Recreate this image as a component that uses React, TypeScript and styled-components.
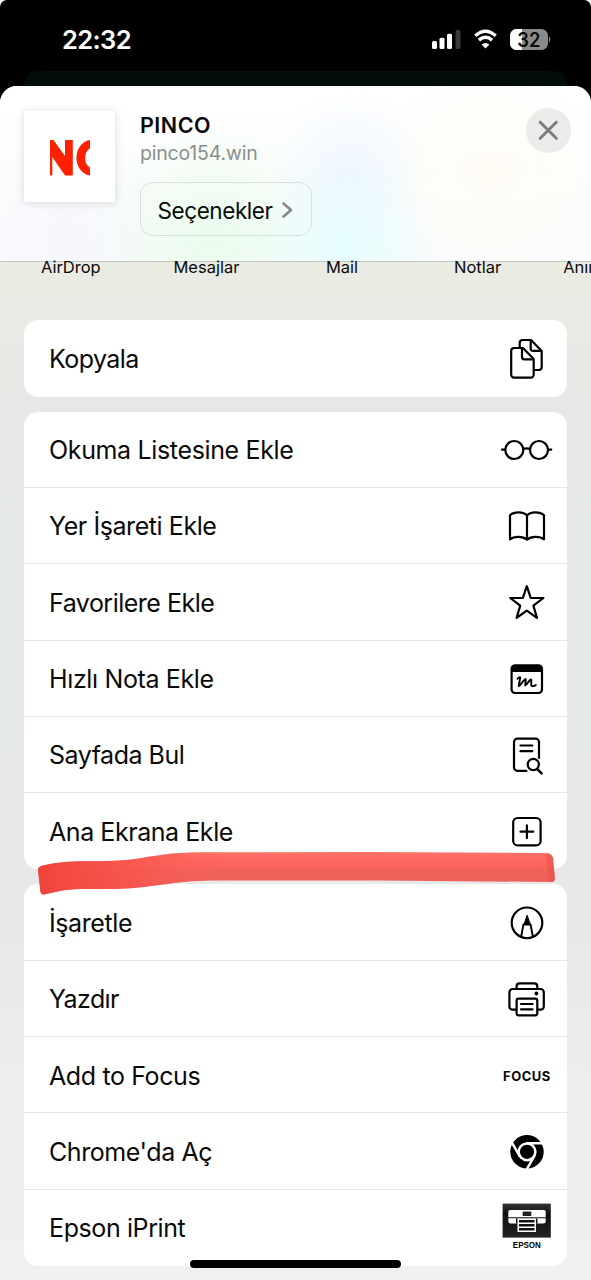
import React from 'react';
import styled, { createGlobalStyle } from 'styled-components';

const Global = createGlobalStyle`
  * { box-sizing: border-box; }
  html, body { margin: 0; padding: 0; background: #fff; }
  body { font-family: Inter, "Liberation Sans", sans-serif; color: #0a0a0a; }
`;

const Screen = styled.div`
  position: relative;
  width: 591px;
  height: 1280px;
  overflow: hidden;
  display: flex;
  flex-direction: column;
  background: #000;
  border-radius: 7px 7px 0 0;
`;

const StatusBar = styled.div`
  height: 71px;
  flex: none;
  display: flex;
  justify-content: space-between;
  padding: 0 40px 0 62px;
  color: #fff;
`;

const Clock = styled.div`
  font-size: 25.5px;
  font-weight: 600;
  line-height: 30px;
  padding-top: 25px;
  letter-spacing: -0.6px;
`;

const StatusIcons = styled.svg`
  display: block;
  margin-top: 24px;
`;

const PageBehind = styled.div`
  height: 15px;
  flex: none;
  margin: 0 24px;
  border-radius: 14px 14px 0 0;
  background: #020d07;
`;

const Sheet = styled.div`
  flex: 1;
  border-radius: 17px 17px 0 0;
  overflow: hidden;
  background: linear-gradient(180deg, #eaebe3 0px, #eaebe3 200px, #e6e8e5 310px, #e5e8e9 480px, #e5e8e9 640px, #eae8e7 850px, #ededec 1000px, #f0f0ef 1194px);
`;

const Header = styled.div`
  height: 176px;
  display: flex;
  padding: 24px 20px 0 24px;
  border-bottom: 1px solid #c3c6c5;
  background:
    radial-gradient(circle 95px at 345px 160px, rgba(226, 253, 255, 0.85), rgba(226, 253, 255, 0)),
    radial-gradient(circle 80px at 350px 85px, rgba(234, 244, 255, 0.75), rgba(234, 244, 255, 0)),
    radial-gradient(circle 120px at 215px 150px, rgba(232, 252, 234, 0.9), rgba(232, 252, 234, 0)),
    radial-gradient(circle 110px at 490px 85px, rgba(255, 252, 244, 0.9), rgba(255, 252, 244, 0)),
    radial-gradient(circle 110px at 70px 150px, rgba(245, 247, 253, 0.9), rgba(245, 247, 253, 0)),
    linear-gradient(180deg, #ffffff, #fafbfb);
`;

const Thumb = styled.div`
  width: 91px;
  height: 91px;
  margin-top: 1px;
  background: #fff;
  box-shadow: 0 1px 8px rgba(0, 0, 0, 0.14);
  flex: none;
  svg { display: block; }
`;

const Info = styled.div`
  flex: 1;
  margin-left: 25px;
  display: flex;
  flex-direction: column;
  align-items: flex-start;
`;

const Title = styled.div`
  font-size: 21.5px;
  font-weight: 600;
  line-height: 28px;
  padding-top: 1px;
  letter-spacing: 0.5px;
`;

const Subtitle = styled.div`
  font-size: 19.5px;
  line-height: 26px;
  margin-top: 1px;
  color: #8b8e8d;
  letter-spacing: -0.2px;
`;

const OptionsButton = styled.button`
  width: 172px;
  height: 54px;
  margin-top: 16px;
  padding: 2px 17px 0 16.5px;
  display: flex;
  align-items: center;
  justify-content: space-between;
  border: 1.5px solid rgba(0, 0, 0, 0.11);
  border-radius: 13px;
  background: transparent;
  color: #0a0a0a;
  font: 400 22.5px Inter, sans-serif;
  letter-spacing: -0.42px;
`;

const CloseButton = styled.button`
  width: 45px;
  height: 45px;
  margin-top: -2px;
  padding: 0;
  border: 0;
  border-radius: 50%;
  background: #ebebea;
  svg { display: block; }
`;

const ShareLabels = styled.div`
  display: flex;
  height: 58px;
  padding-left: 3px;
  font-size: 16.5px;
  line-height: 20px;
  margin-top: -5px;
`;

const ShareLabel = styled.div`
  flex: 0 0 135.6px;
  text-align: center;
`;

const Cards = styled.div`
  display: flex;
  flex-direction: column;
  gap: 15px;
  padding: 5.2px 24px 0;
  width: 591px;
`;

const Card = styled.div`
  border-radius: 14px;
  background: #fff;
  width: 543px;
`;

const Row = styled.div`
  height: 76.33px;
  display: flex;
  align-items: center;
  justify-content: space-between;
  padding: 1.6px 12px 0 25px;
  border-bottom: 1px solid #e5e7e7;
  &:last-child { border-bottom-color: transparent; }
  svg { display: block; flex: none; }
`;

const RowLabel = styled.div<{ $track: number }>`
  font-size: 25px;
  line-height: 32px;
  white-space: nowrap;
  letter-spacing: ${(p) => p.$track}px;
`;

const FocusMark = styled.div`
  width: 56px;
  text-align: center;
  font-size: 13px;
  font-weight: 700;
  letter-spacing: 0.5px;
`;

const Marker = styled.svg`
  position: absolute;
  left: 30px;
  top: 845px;
`;

const HomeIndicator = styled.div`
  position: absolute;
  left: 190px;
  top: 1260px;
  width: 211px;
  height: 8px;
  border-radius: 4px;
  background: #000;
`;

const Icon = ({ children }: { children: React.ReactNode }) => (
  <svg width="56" height="56" viewBox="0 0 56 56" fill="none" stroke="#000" strokeWidth="2.200" strokeLinecap="round" strokeLinejoin="round">
    {children}
  </svg>
);

const CopyIcon = () => (
  <Icon>
    <path d="M20.700 16V12a3 3 0 0 1 3-3H32L42.700 20V36a3 3 0 0 1-3 3H36" />
    <path d="M31.700 9.500V17.500a2.300 2.300 0 0 0 2.300 2.300H42" />
    <path d="M15.200 17H24L34.700 28V43.700a3 3 0 0 1-3 3H15.200a3 3 0 0 1-3-3V20a3 3 0 0 1 3-3Z" />
    <path d="M23 17.500V26a2.300 2.300 0 0 0 2.300 2.300H34" />
  </Icon>
);

const GlassesIcon = () => (
  <Icon>
    <circle cx="15.300" cy="28" r="9" />
    <circle cx="40" cy="28" r="9" />
    <path d="M24.300 26.900Q27.700 25.900 31 26.900M3 27.600H6M49.300 27.600H52.300" />
  </Icon>
);

const BookIcon = () => (
  <Icon>
    <path d="M28 41.500V17.500C24.500 13.300 15 13.300 11 17.300V41.300C15 38.200 24 38 28 41.700C32 38 41 38.200 45 41.300V17.300C41 13.300 31.500 13.300 28 17.500" />
  </Icon>
);

const StarIcon = () => (
  <Icon>
    <path d="M27.800 11.200L31.700 22.800L44.400 23L34.400 30.700L38 42.900L27.800 35.700L17.600 42.900L21.200 30.700L11.200 23L23.900 22.800Z" />
  </Icon>
);

const QuickNoteIcon = () => (
  <Icon>
    <rect x="12.600" y="14.300" width="30.400" height="27.700" rx="3.500" />
    <path d="M12.600 21V17.500a3.200 3.200 0 0 1 3.200-3.200H39.800a3.200 3.200 0 0 1 3.200 3.200V21Z" fill="#000" stroke="none" />
    <path strokeWidth="1.900" d="M18.500 27.800C20 26.500 21.300 25.300 21.200 27C20.900 30 19.300 34 19.800 35.200C21.300 34.500 24.500 28.700 26.800 28C27.500 28.500 25.700 33 26.200 34.300C27.800 34 30 29.300 32 28.500C33 28.800 31.700 33 32.300 34.300C33.300 35.600 35 35.300 36.800 33.900" />
  </Icon>
);

const FindIcon = () => (
  <Icon>
    <path d="M40 31V15a3.300 3.300 0 0 0-3.300-3.300H18.300A3.300 3.300 0 0 0 15 15V40.500a3.300 3.300 0 0 0 3.300 3.300H27.500" />
    <path d="M21.500 18.500H33.300M21.500 24.200H33.300" />
    <circle cx="34.300" cy="37.500" r="5.600" />
    <path d="M38.600 42.300L42.600 46.300" strokeWidth="2.500" />
  </Icon>
);

const AddIcon = () => (
  <Icon>
    <rect x="14.200" y="14" width="27.400" height="27.400" rx="4.500" />
    <path d="M21.500 27.700H34.300M27.900 21.300V34.100" />
  </Icon>
);

const MarkupIcon = () => (
  <Icon>
    <circle cx="28" cy="27.800" r="15.300" />
    <path d="M28 20.500L24.800 30H31.200Z" fill="#000" strokeWidth="1" />
    <path d="M24.400 29.500L22.200 41.500M31.600 29.500L33.800 41.500" strokeWidth="1.900" />
  </Icon>
);

const PrinterIcon = () => (
  <Icon>
    <path d="M17.600 17.500V15.300a3 3 0 0 1 3-3H35.300a3 3 0 0 1 3 3V17.500" />
    <path d="M17 38.700H13.700a3.300 3.300 0 0 1-3.300-3.300V21.300A3.300 3.300 0 0 1 13.700 18H41.500a3.300 3.300 0 0 1 3.300 3.300V35.400a3.300 3.300 0 0 1-3.300 3.300H38.500" />
    <rect x="17.600" y="27.600" width="20.700" height="16.700" rx="2" />
    <path d="M22 33H33.600M22 38.300H33.600" />
    <circle cx="37.400" cy="22.500" r="1.900" fill="#000" stroke="none" />
  </Icon>
);

const ChromeIcon = () => (
  <Icon>
    <g stroke="none">
      <circle cx="28" cy="27.800" r="16.700" fill="#000" />
      <circle cx="28" cy="27.800" r="9.600" fill="#fff" />
      <circle cx="28" cy="27.800" r="7.100" fill="#000" />
    </g>
    {[0, 120, 240].map((a) => (
      <path key={a} d="M28 19.300H44" stroke="#fff" strokeWidth="2.400" transform={`rotate(${a} 28 27.800)`} />
    ))}
  </Icon>
);

const EpsonIcon = () => (
  <Icon>
    <defs>
      <linearGradient id="epson" x1="0" y1="0" x2="0" y2="1">
        <stop offset="0" stopColor="#333" />
        <stop offset="0.300" stopColor="#111" />
        <stop offset="1" stopColor="#222" />
      </linearGradient>
    </defs>
    <g stroke="none">
      <rect x="3.600" y="3.600" width="48.200" height="34" fill="url(#epson)" />
      <path d="M11.300 10H44.700a2 2 0 0 1 2 2V17.200H9.300V12a2 2 0 0 1 2-2Z" fill="#fff" />
      <path d="M9.300 18.200H46.700V21a2.500 2.500 0 0 1-2.500 2.500H11.800A2.500 2.500 0 0 1 9.300 21Z" fill="#fff" />
      <rect x="23.700" y="11.500" width="8.600" height="4.500" fill="#222" />
      <rect x="17" y="18.500" width="21.500" height="5" fill="#111" />
      <rect x="18.500" y="18.500" width="18.500" height="13.500" fill="#fff" />
      <path d="M20 20H35.500V22.600H20ZM20 24H35.500V26.500H20ZM20 28H35.500V30.500H20Z" fill="#111" />
      <text x="27.800" y="47.500" textAnchor="middle" fontFamily="Liberation Sans, sans-serif" fontSize="8.600" fontWeight="700" textLength="28" lengthAdjust="spacingAndGlyphs" fill="#000">EPSON</text>
    </g>
  </Icon>
);

type Item = { label: string; track: number; icon: React.ReactNode };

const groups: Item[][] = [
  [{ label: 'Kopyala', track: -0.55, icon: <CopyIcon /> }],
  [
    { label: 'Okuma Listesine Ekle', track: -0.35, icon: <GlassesIcon /> },
    { label: 'Yer İşareti Ekle', track: -0.42, icon: <BookIcon /> },
    { label: 'Favorilere Ekle', track: -0.5, icon: <StarIcon /> },
    { label: 'Hızlı Nota Ekle', track: -0.36, icon: <QuickNoteIcon /> },
    { label: 'Sayfada Bul', track: -0.48, icon: <FindIcon /> },
    { label: 'Ana Ekrana Ekle', track: -0.44, icon: <AddIcon /> },
  ],
  [
    { label: 'İşaretle', track: -0.4, icon: <MarkupIcon /> },
    { label: 'Yazdır', track: -0.6, icon: <PrinterIcon /> },
    { label: 'Add to Focus', track: -0.38, icon: <FocusMark>FOCUS</FocusMark> },
    { label: "Chrome'da Aç", track: -0.42, icon: <ChromeIcon /> },
    { label: 'Epson iPrint', track: -0.4, icon: <EpsonIcon /> },
  ],
];

export default function App() {
  return (
    <>
      <Global />
      <Screen>
        <StatusBar>
          <Clock>22:32</Clock>
          <StatusIcons width="122" height="32" viewBox="429 24 122 32">
            <g fill="#fff">
              <rect x="432" y="41" width="5" height="8" rx="1.500" />
              <rect x="439.500" y="37.700" width="5" height="11.300" rx="1.500" />
              <rect x="447" y="33.700" width="5" height="15.300" rx="1.500" />
              <rect x="455.500" y="30" width="5" height="19" rx="1.500" fill="#3a3a3a" />
              <path d="M485.500 48.600L481.600 44.600Q485.500 41.200 489.400 44.600Z" />
            </g>
            <path d="M475.300 37Q485.500 27.800 495.700 37M478.900 41.300Q485.500 35.500 492.100 41.300" fill="none" stroke="#fff" strokeWidth="3.400" transform="translate(0 -1.200)" />
            <clipPath id="battery"><rect x="510" y="29" width="38" height="21" rx="6.500" /></clipPath>
            <g clipPath="url(#battery)">
              <rect x="510" y="29" width="38" height="21" fill="#8a8a8a" />
              <rect x="510" y="29" width="12" height="21" fill="#fff" />
            </g>
            <path d="M549 36Q551.500 39.500 549 43Z" fill="#8a8a8a" />
            <text x="528.800" y="46.500" textAnchor="middle" fontFamily="Inter, sans-serif" fontSize="19.500" fontWeight="600" textLength="23" lengthAdjust="spacingAndGlyphs" fill="#0a0a0a">32</text>
          </StatusIcons>
        </StatusBar>
        <PageBehind />
        <Sheet>
          <Header>
            <Thumb>
              <svg width="91" height="91" viewBox="24 111 91 91" fill="#ff2000">
                <path d="M50 140H53.500L65 156V140H72.800V175.500H65L52.300 157V175.500H50Z" />
                <path d="M90 140V148.500C83.500 151.500 83.500 164.500 90 167.500V175.500C72 172.500 72 143 90 140Z" />
              </svg>
            </Thumb>
            <Info>
              <Title>PINCO</Title>
              <Subtitle>pinco154.win</Subtitle>
              <OptionsButton>
                Seçenekler
                <svg width="12" height="18" viewBox="0 0 12 18" fill="none" stroke="#858988" strokeWidth="2.600" strokeLinecap="round" strokeLinejoin="round">
                  <path d="M1.500 2.500L9 9L1.500 15.500" />
                </svg>
              </OptionsButton>
            </Info>
            <CloseButton aria-label="Kapat">
              <svg width="45" height="45" viewBox="0 0 45 45" stroke="#7d7d7d" strokeWidth="3" strokeLinecap="round">
                <path d="M14.200 14.200L30.300 30.300M30.300 14.200L14.200 30.300" />
              </svg>
            </CloseButton>
          </Header>
          <ShareLabels>
            <ShareLabel>AirDrop</ShareLabel>
            <ShareLabel>Mesajlar</ShareLabel>
            <ShareLabel>Mail</ShareLabel>
            <ShareLabel>Notlar</ShareLabel>
            <ShareLabel>Anımsatıcılar</ShareLabel>
          </ShareLabels>
          <Cards>
            {groups.map((items, i) => (
              <Card key={i}>
                {items.map((it) => (
                  <Row key={it.label}>
                    <RowLabel $track={it.track}>{it.label}</RowLabel>
                    {it.icon}
                  </Row>
                ))}
              </Card>
            ))}
          </Cards>
        </Sheet>
        <Marker width="535" height="56" viewBox="30 845 535 56">
          <defs>
            <linearGradient id="ink" x1="0" y1="852" x2="0" y2="883" gradientUnits="userSpaceOnUse">
              <stop offset="0" stopColor="#f9746d" />
              <stop offset="0.200" stopColor="#ff675f" />
              <stop offset="0.500" stopColor="#fb645d" />
              <stop offset="0.580" stopColor="#ee625a" />
              <stop offset="1" stopColor="#ee6059" />
            </linearGradient>
            <linearGradient id="inkStart" x1="38" y1="0" x2="230" y2="0" gradientUnits="userSpaceOnUse">
              <stop offset="0" stopColor="#f0443c" />
              <stop offset="0.500" stopColor="#f8524a" stopOpacity="0.700" />
              <stop offset="1" stopColor="#fb645d" stopOpacity="0" />
            </linearGradient>
          </defs>
          {['url(#ink)', 'url(#inkStart)'].map((f) => (
            <path key={f} fill={f} d="M38 870Q38 867 41 866Q52 863 65 862C90 860.500 110 862 132 859.500C155 856 172 852.300 200 852.300L370 852L546 853Q552 853 553 858L555 879Q555 882 551 882L380 880.500H210C175 881 155 887 125 888.500C100 890 80 887.500 62 890.500L44 894.500Q41 895 40.500 892Z" />
          ))}
          <path d="M546 854Q552 854 553 858L555 879Q555 882 551 882L548 881Z" fill="#e4504a" opacity="0.500" />
        </Marker>
        <HomeIndicator />
      </Screen>
    </>
  );
}
